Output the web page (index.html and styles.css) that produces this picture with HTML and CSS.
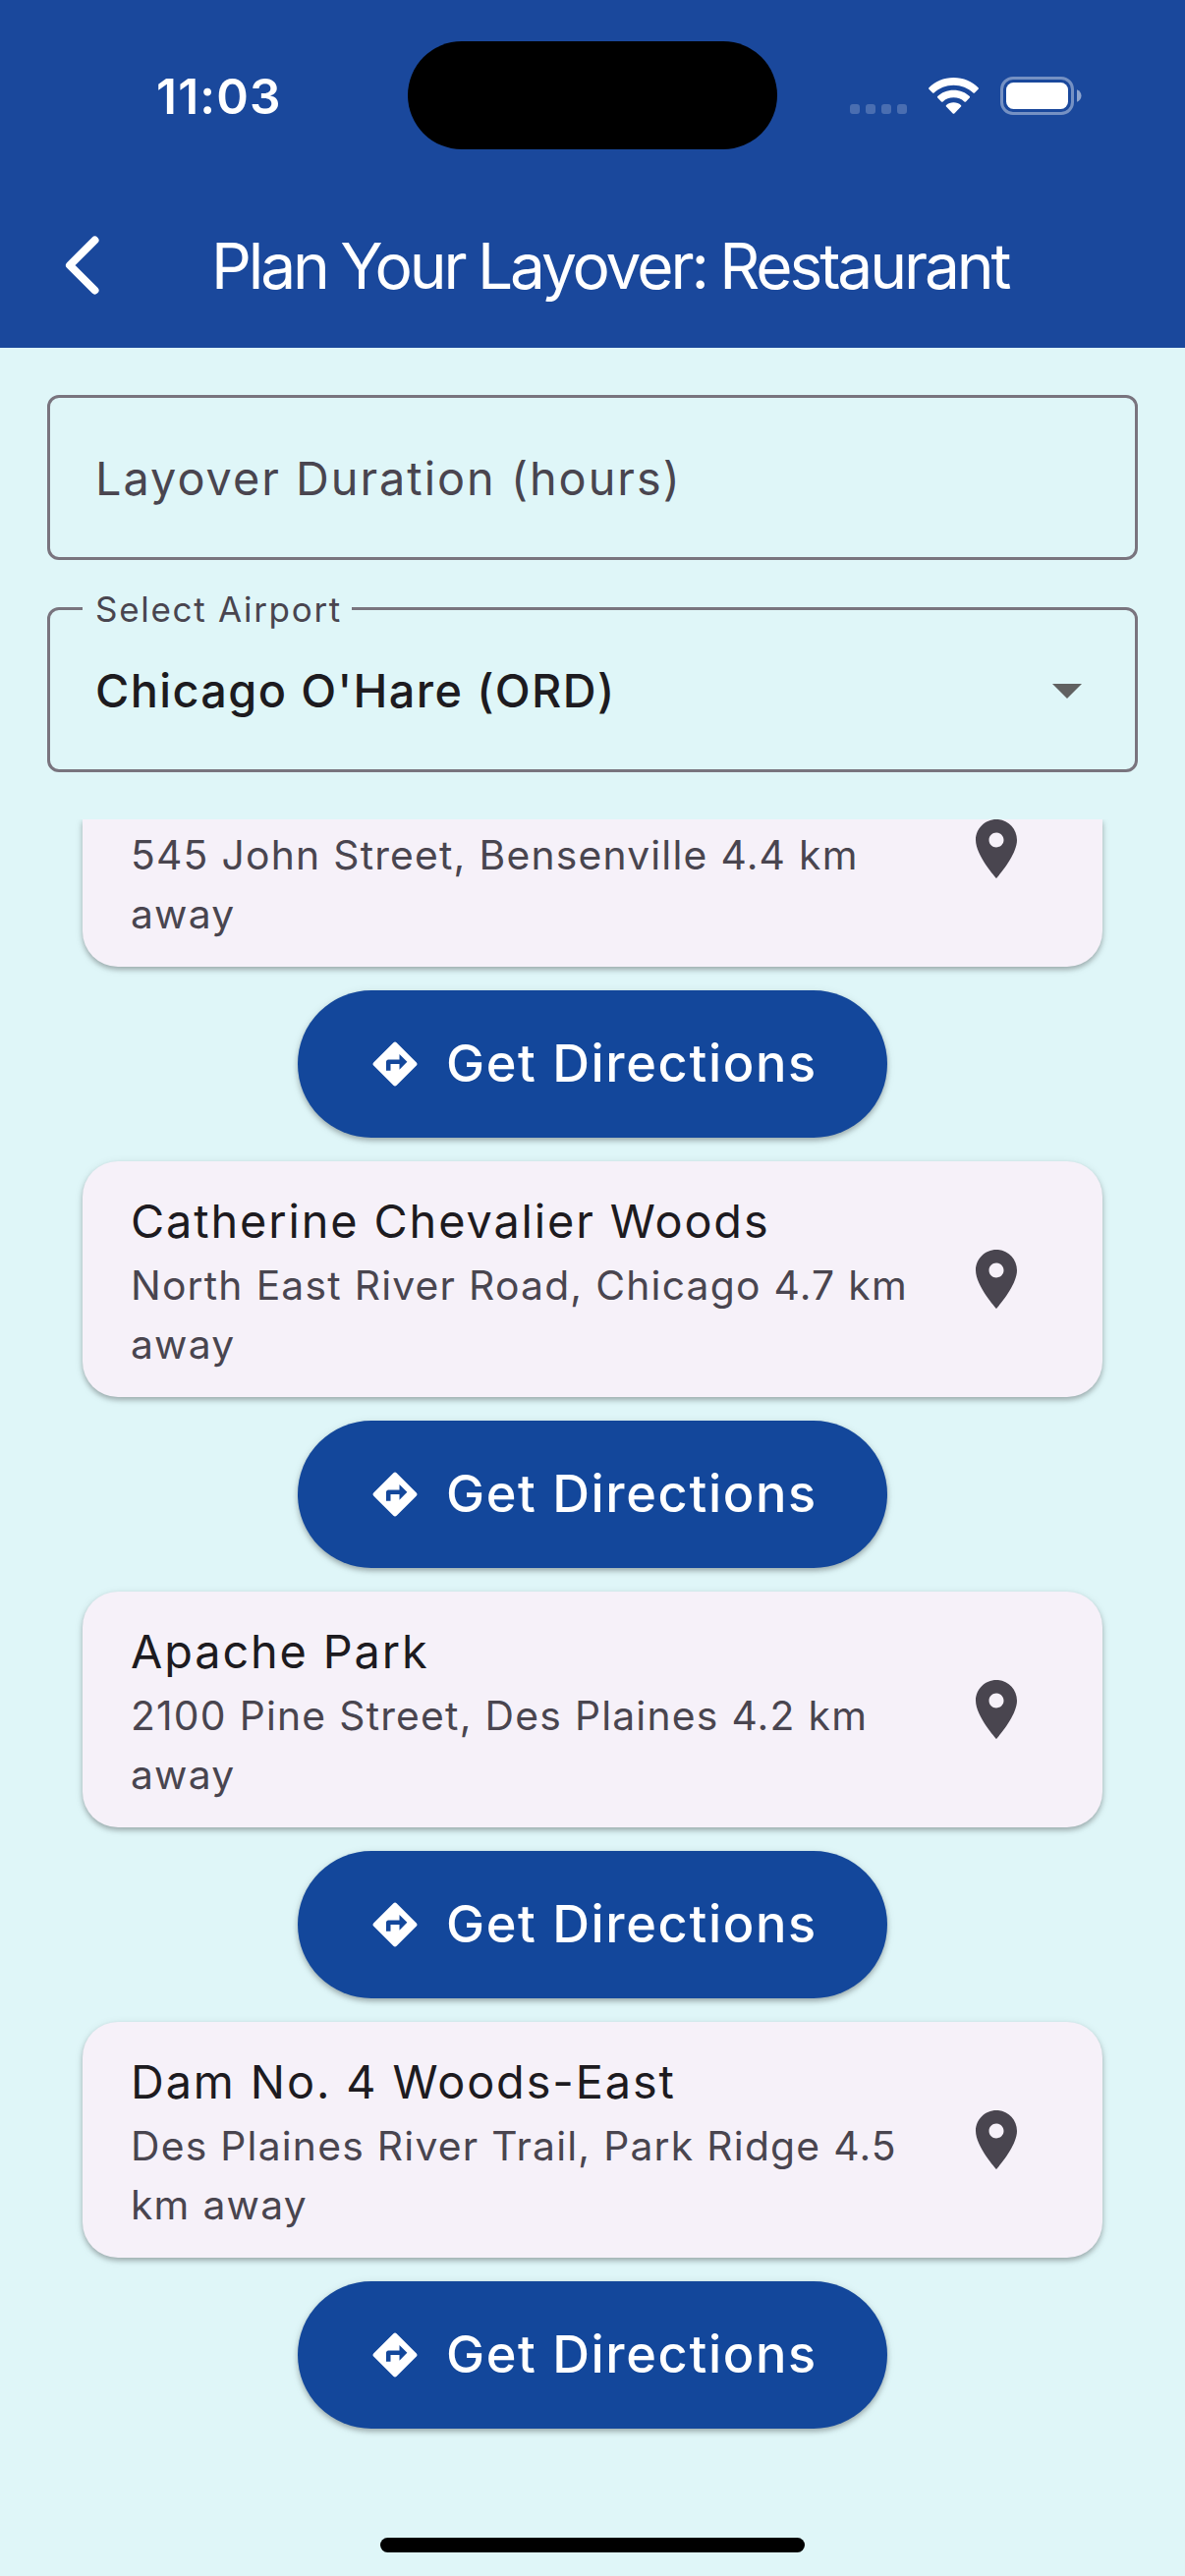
FILE: index.html
```html
<!DOCTYPE html>
<html lang="en">
<head>
<meta charset="utf-8">
<title>Plan Your Layover</title>
<link rel="stylesheet" href="styles.css">
</head>
<body>
<svg class="defs" aria-hidden="true">
  <symbol id="pin" viewBox="0 0 24 24"><path d="M12 2C8.13 2 5 5.13 5 9c0 5.25 7 13 7 13s7-7.75 7-13c0-3.87-3.13-7-7-7zm0 9.5c-1.38 0-2.5-1.12-2.5-2.5s1.12-2.500 2.500-2.500 2.500 1.120 2.500 2.500-1.120 2.500-2.500 2.500z"/></symbol>
  <symbol id="directions" viewBox="0 0 24 24"><path d="M21.710 11.290l-9-9c-.39-.39-1.020-.39-1.410 0l-9 9c-.39.39-.39 1.020 0 1.410l9 9c.39.39 1.020.39 1.410 0l9-9c.39-.38.39-1.010 0-1.410zM14 14.500V12h-4v3H8v-4c0-.55.45-1 1-1h5V7.500l3.500 3.500-3.500 3.500z"/></symbol>
</svg>
<div class="screen">
  <header class="header">
    <div class="status">
      <div class="status-left"><span class="clock">11:03</span></div>
      <div class="island"></div>
      <div class="status-right">
        <div class="cell"><i></i><i></i><i></i><i></i></div>
        <svg class="wifi" viewBox="0 0 51 37"><path d="M25.500 0C35.500 0 44.500 3.900 50.600 10.200Q51.300 11 50.600 11.800L46.900 15.500Q46.200 16.200 45.400 15.500C40.200 10.600 33.200 7.700 25.500 7.700S10.800 10.600 5.600 15.500Q4.800 16.200 4.100 15.500L.4 11.800Q-.3 11 .4 10.200C6.500 3.900 15.500 0 25.500 0z"/><path d="M25.500 12.700C32 12.700 37.700 15.100 41.800 19.100Q42.500 19.900 41.800 20.600L38 24.400Q37.200 25.100 36.400 24.400C33.500 21.800 29.700 20.300 25.500 20.300S17.500 21.800 14.600 24.400Q13.800 25.100 13 24.400L9.200 20.600Q8.500 19.900 9.200 19.100C13.300 15.100 19 12.700 25.500 12.700z"/><path d="M25.500 25.300C28.500 25.300 31 26.300 32.900 27.900Q33.700 28.700 33 29.500L26.300 36.400Q25.500 37.200 24.700 36.400L18 29.500Q17.300 28.700 18.100 27.900C20 26.300 22.500 25.300 25.500 25.300z"/></svg>
        <svg class="battery" viewBox="0 0 83 39"><rect x="1.500" y="1.500" width="72" height="36" rx="11.500" fill="none" stroke="#fff" stroke-opacity=".4" stroke-width="3"/><rect x="6" y="6" width="63" height="27" rx="7.500" fill="#fff"/><path d="M78 13.300c2.800 1 4.500 3.500 4.500 6.200s-1.700 5.200-4.500 6.200z" fill="#fff" fill-opacity=".5"/></svg>
      </div>
    </div>
    <div class="appbar">
      <svg class="back" viewBox="0 0 72 72"><path d="M48.500 10.500L23 36l25.500 25.500"/></svg>
      <h1 class="title">Plan Your Layover: Restaurant</h1>
    </div>
  </header>
  <main class="form">
    <div class="field"><span class="placeholder">Layover Duration (hours)</span></div>
    <div class="field"><span class="label">Select Airport</span><span class="value">Chicago O'Hare (ORD)</span>
      <svg class="caret" viewBox="0 0 30 15"><path d="M0 0h30L15 15z"/></svg></div>
  </main>
  <section class="list">
    <article class="card card-cut"><div class="text"><p class="address">545 John Street, Bensenville 4.4 km<br>away</p></div><svg class="pin"><use href="#pin"/></svg></article>
    <button class="go"><svg><use href="#directions"/></svg><span>Get Directions</span></button>
    <article class="card"><div class="text"><h2 class="name">Catherine Chevalier Woods</h2><p class="address">North East River Road, Chicago 4.7 km<br>away</p></div><svg class="pin"><use href="#pin"/></svg></article>
    <button class="go"><svg><use href="#directions"/></svg><span>Get Directions</span></button>
    <article class="card"><div class="text"><h2 class="name">Apache Park</h2><p class="address">2100 Pine Street, Des Plaines 4.2 km<br>away</p></div><svg class="pin"><use href="#pin"/></svg></article>
    <button class="go"><svg><use href="#directions"/></svg><span>Get Directions</span></button>
    <article class="card"><div class="text"><h2 class="name">Dam No. 4 Woods-East</h2><p class="address">Des Plaines River Trail, Park Ridge 4.5<br>km away</p></div><svg class="pin"><use href="#pin"/></svg></article>
    <button class="go"><svg><use href="#directions"/></svg><span>Get Directions</span></button>
  </section>
  <footer class="home"><div class="home-bar"></div></footer>
</div>
</body>
</html>
```
FILE: styles.css
```css
* { box-sizing: border-box; margin: 0; padding: 0; }
body { background: #dff6f8; font-family: Inter, "Liberation Sans", sans-serif; white-space: nowrap; }
svg { display: block; flex: none; }
.defs { display: none; }
.screen { width: 1206px; height: 2622px; display: flex; flex-direction: column; overflow: hidden; }

.header { height: 354px; background: #1a489c; color: #fff; }
.status { height: 177px; display: grid; grid-template-columns: 415px 376px 415px; }
.status-left { padding: 62px 0 0 159px; }
.clock { display: block; font-size: 49.5px; line-height: 72px; font-weight: 600; letter-spacing: 1.2px; }
.island { height: 110px; margin-top: 42px; background: #000; border-radius: 55px; }
.status-right { display: flex; align-items: flex-start; padding: 78px 0 0 74px; }
.cell { display: flex; gap: 6px; margin-top: 28px; }
.cell i { width: 10px; height: 10px; border-radius: 3px; background: rgba(255, 255, 255, .21); }
.wifi { width: 51px; height: 37px; margin: 1px 22px 0; fill: #fff; }
.battery { width: 83px; height: 39px; }
.appbar { height: 177px; display: flex; align-items: flex-start; padding: 57px 0 0 48px; }
.back { width: 72px; height: 72px; fill: none; stroke: #fff; stroke-width: 8px; stroke-linecap: round; stroke-linejoin: round; }
.title { margin-left: 95px; font-size: 64px; line-height: 73px; font-weight: 400; letter-spacing: -3.1px; word-spacing: -1.5px; }

.form { padding: 48px 48px 0; display: flex; flex-direction: column; gap: 48px; }
.field { position: relative; height: 168px; border: 3px solid #79747e; border-radius: 12px; display: flex; align-items: center; justify-content: space-between; padding: 0 54px 0 46px; }
.placeholder { padding-top: 2px; font-size: 46.8px; line-height: 60px; letter-spacing: 2px; color: #49454f; }
.value { padding-top: 2px; font-size: 46.8px; line-height: 60px; font-weight: 500; letter-spacing: 1.4px; color: #1d1b20; }
.label { position: absolute; left: 33px; top: -25px; width: 274px; padding-left: 13px; background: #dff6f8; font-size: 35px; line-height: 48px; letter-spacing: 1.7px; color: #49454f; }
.caret { width: 30px; height: 15px; fill: #616161; margin-top: 2px; }

.list { margin-top: 48px; height: 1680px; overflow: hidden; display: flex; flex-direction: column; align-items: center; gap: 24px; }
.card { flex: none; width: 1038px; height: 240px; padding: 26px 72px 0 49px; background: #f6f1f9; border-radius: 36px; display: flex; justify-content: space-between; box-shadow: 0 3px 5px rgba(0, 0, 0, .24), 0 2px 10px rgba(0, 0, 0, .1); }
.card .pin { width: 72px; height: 72px; margin-top: 58px; fill: #49454f; }
.card-cut { height: 150px; padding-top: 6px; border-radius: 0 0 36px 36px; }
.card-cut .pin { margin-top: -12px; }
.name { font-size: 46.8px; line-height: 70px; font-weight: 400; letter-spacing: 1.9px; color: #1d1b20; }
.address { font-size: 40.8px; line-height: 60px; letter-spacing: 1.2px; word-spacing: .3px; color: #49454f; }
.go { flex: none; width: 600px; height: 150px; border: 0; border-radius: 75px; background: #13479b; color: #fff; font: 500 52.3px/78px Inter, "Liberation Sans", sans-serif; letter-spacing: 1.65px; display: flex; align-items: center; padding: 0 0 0 72px; gap: 25px; box-shadow: 0 3px 5px rgba(0, 0, 0, .24), 0 2px 10px rgba(0, 0, 0, .1); }
.go svg { width: 54px; height: 54px; fill: #fff; }
.go span { padding-bottom: 3px; }

.home { display: flex; justify-content: center; padding-top: 69px; }
.home-bar { width: 432px; height: 15px; border-radius: 8px; background: #000; }
```
